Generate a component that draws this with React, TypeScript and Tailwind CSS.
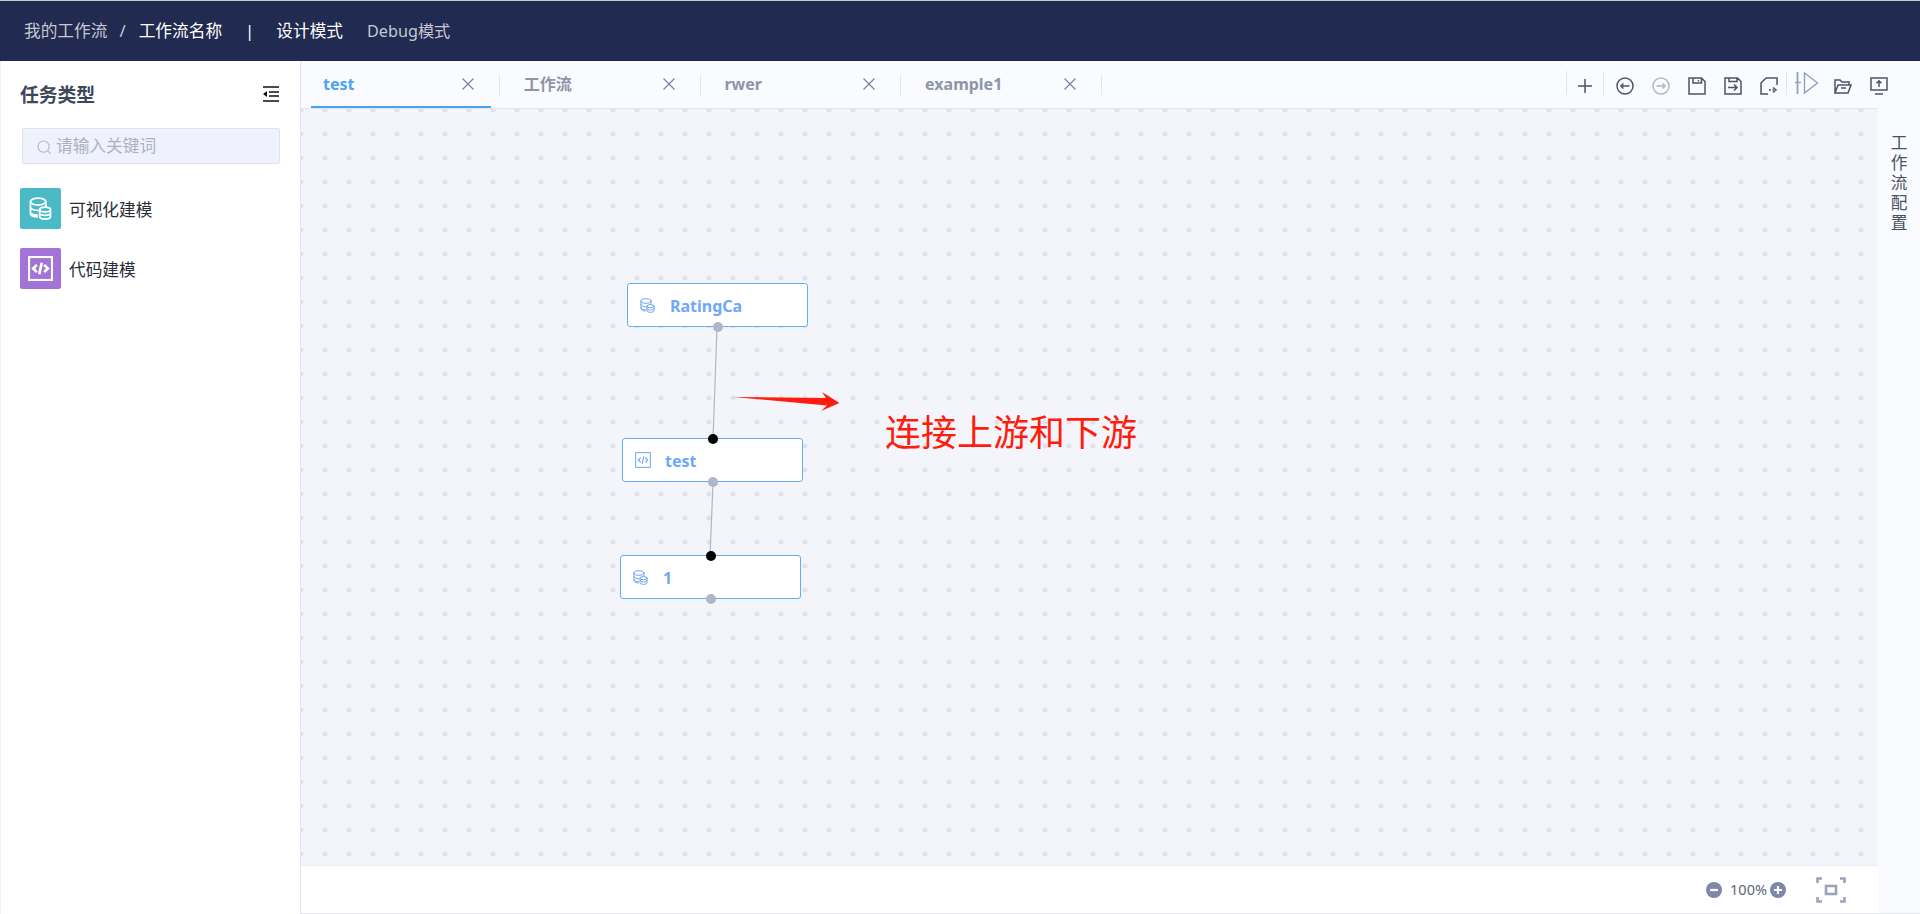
import React from "react";

const DbIcon = ({ className = "", color = "currentColor", sw = 1.6 }: { className?: string; color?: string; sw?: number }) => (
  <svg viewBox="0 0 24 24" className={className} fill="none" stroke={color} strokeWidth={sw} strokeLinecap="round">
    <ellipse cx="9.5" cy="4.8" rx="8" ry="3.6" />
    <path d="M1.5 4.8v12.4c0 1.9 3.2 3.4 7.2 3.5M1.5 10.5c0 1.9 3.5 3.5 8 3.5M1.5 15.5c0 1.8 3 3.2 7 3.4M17.5 4.8v5.4" />
    <ellipse cx="16.8" cy="13" rx="5.6" ry="2.5" />
    <path d="M11.2 13v7.5c0 1.3 2.5 2.4 5.6 2.4s5.6-1.1 5.6-2.4V13M11.2 16.8c0 1.3 2.5 2.4 5.6 2.4s5.6-1.1 5.6-2.4" />
  </svg>
);

const CodeIcon = ({ className = "", color = "currentColor", sw = 2, inner = 2.4 }: { className?: string; color?: string; sw?: number; inner?: number }) => (
  <svg viewBox="0 0 24 24" className={className} fill="none" stroke={color} strokeWidth={sw}>
    <rect x="1" y="1" width="22" height="22" />
    <path d="M8.5 8.5L5 12l3.5 3.5M15.5 8.5L19 12l-3.5 3.5M13.2 6.5l-2.4 11" strokeWidth={inner} />
  </svg>
);

const CloseX = () => (
  <svg viewBox="0 0 12 12" className="w-[12px] h-[12px]" fill="none" stroke="#78819f" strokeWidth="1.1">
    <path d="M.5.5l11 11M11.5.5l-11 11" />
  </svg>
);

const Tool = ({ children, faded = false }: { children: React.ReactNode; faded?: boolean }) => (
  <svg viewBox="0 0 18 18" className={`w-[18px] h-[18px] ${faded ? "text-[#b4b7bf]" : "text-[#4d5468]"}`} fill="none" stroke="currentColor" strokeWidth="1.5">
    {children}
  </svg>
);

const tabs = ["test", "工作流", "rwer", "example1"];

function Node({ left, top, label, kind, topPort }: { left: string; top: string; label: string; kind: "db" | "code"; topPort?: boolean }) {
  return (
    <div className={`absolute w-[181px] h-[44px] bg-white border border-[#62aef5] rounded-[3px] flex items-center pl-[12px] ${left} ${top}`}>
      {kind === "db" ? <DbIcon className="w-[15px] h-[15px]" color="#6ea4f2" sw={1.6} /> : <CodeIcon className="w-[16px] h-[16px]" color="#6ea4f2" sw={1.5} inner={1.7} />}
      <span className={`font-bold text-[16px] text-[#6ea8f7] pt-[1px] ${kind === "db" ? "ml-[15px]" : "ml-[14px]"}`}>{label}</span>
      {topPort && <span className="absolute left-1/2 -translate-x-1/2 -top-[5px] w-[10px] h-[10px] rounded-full bg-black" />}
      <span className="absolute left-1/2 -translate-x-1/2 -bottom-[6px] w-[10px] h-[10px] rounded-full bg-[#b1b5c9]" />
    </div>
  );
}

export default function App() {
  return (
    <div className="h-[914px] w-[1920px] flex flex-col overflow-hidden bg-white font-['Noto_Sans','Noto_Sans_CJK_SC',sans-serif]">
      <div className="h-px bg-[#c9cad0]" />
      <header className="h-[60px] bg-[#212a50] flex items-center pl-[24px] pt-[1px] text-[16.7px] leading-none">
        <span className="text-[#c5c8d2]">我的工作流</span>
        <span className="text-[#c5c8d2] ml-[12px]">/</span>
        <span className="text-white ml-[13px]">工作流名称</span>
        <span className="text-white ml-[23px]">|</span>
        <span className="text-white ml-[22px]">设计模式</span>
        <span className="text-[#c5c8d2] ml-[24px] text-[16.2px]">Debug模式</span>
      </header>

      <div className="flex-1 flex min-h-0">
        <aside className="w-[301px] shrink-0 border-r border-l border-r-[#e2e5f0] border-l-[#f0f1f3] bg-white flex flex-col pl-[19px]">
          <div className="flex items-center justify-between h-[26px] mt-[21px] pr-[20px]">
            <span className="text-[18.8px] font-bold text-[#40475a] leading-none">任务类型</span>
            <svg viewBox="0 0 18 18" className="w-[18px] h-[18px] -mt-[2px]" fill="none" stroke="#111" strokeWidth="1.6">
              <path d="M1 2h16M7 7h10M7 11h10M1 16h16" />
              <path d="M5 6v6L1 9z" fill="#111" stroke="none" />
            </svg>
          </div>
          <div className="mt-[20px] ml-[2px] w-[258px] h-[36px] rounded-[2px] bg-[#eff2fc] border border-[#dde2f1] flex items-center pl-[14px]">
            <svg viewBox="0 0 16 16" className="w-[15px] h-[15px] mt-[2px]" fill="none" stroke="#b3b8c8" strokeWidth="1.2">
              <circle cx="7" cy="7" r="6" />
              <path d="M11.5 11.5l3 3" />
            </svg>
            <span className="ml-[4px] mt-[1px] text-[16.7px] text-[#adb1bd] leading-none">请输入关键词</span>
          </div>
          <div className="mt-[24px] flex items-center h-[41px]">
            <div className="w-[41px] h-[41px] rounded-[2px] bg-[#4abac6] flex items-center justify-center">
              <DbIcon className="w-[23px] h-[25px]" color="#ffffff" sw={1.8} />
            </div>
            <span className="ml-[8px] mt-[3px] text-[16.7px] text-[#2a2d35] leading-none">可视化建模</span>
          </div>
          <div className="mt-[19px] flex items-center h-[41px]">
            <div className="w-[41px] h-[41px] rounded-[2px] bg-[#a274d8] flex items-center justify-center">
              <CodeIcon className="w-[25px] h-[25px]" color="#ffffff" sw={2} inner={2.6} />
            </div>
            <span className="ml-[8px] mt-[3px] text-[16.7px] text-[#2a2d35] leading-none">代码建模</span>
          </div>
        </aside>

        <main className="flex-1 flex flex-col min-w-0 bg-[#f9fbfe]">
          <div className="h-[47px] shrink-0 flex items-center">
            <div className="flex items-stretch h-[47px] pl-[10px]">
              {tabs.map((t, i) => (
                <div key={t} className="flex items-center">
                  <div className={`w-[180px] h-[47px] flex items-center justify-between pl-[12px] pr-[17px] border-b-2 ${i === 0 ? "border-[#4ba3ee]" : "border-transparent"}`}>
                    <span className={`font-bold text-[16px] leading-none ${i === 0 ? "text-[#4ea4f2]" : "text-[#8f95a6]"}`}>{t}</span>
                    <CloseX />
                  </div>
                  <div className="ml-[8px] mr-[11.7px] w-px h-[20px] bg-[#e2e5ee]" />
                </div>
              ))}
            </div>
            <div className="ml-auto flex items-center pr-[32px] pt-[3px]">
              <div className="w-px h-[24px] mb-[6px] bg-[#e2e5ee]" />
              <div className="w-[36px] flex justify-center">
                <Tool><path d="M9 2v14M2 9h14" /></Tool>
              </div>
              <div className="w-px h-[24px] mb-[6px] bg-[#e2e5ee] mr-[12px]" />
              <div className="flex items-center gap-[18px]">
                <Tool><circle cx="9" cy="9" r="8" /><path d="M13.5 9h-9M7.5 6.5L4.8 9l2.7 2.5" /></Tool>
                <Tool faded><circle cx="9" cy="9" r="8" /><path d="M4.5 9h9M10.5 6.5L13.2 9l-2.7 2.5" /></Tool>
                <Tool><path d="M1 1h12.5L17 4.5V17H1zM5 1v5h8.5V1M10.5 3v1.5" /></Tool>
                <Tool><path d="M1 1h12.5L17 4.5V17H1zM5 1v3.5h8V1M4 10.5h9M10 7.5l3 3-3 3" /></Tool>
                <Tool><path d="M6 1h11v7M6 1L1 6v11h7M9 13h2M12.5 13h1.5M13 10.5l3 2.5-3 2.5" /></Tool>
              </div>
              <div className="w-px h-[24px] mb-[6px] bg-[#e2e5ee] ml-[8px] mr-[8px]" />
              <svg viewBox="0 0 24 24" className="w-[24px] h-[24px] mb-[6px]" fill="none" strokeWidth="1.4">
                <path d="M2.5 1v22" stroke="#8ba2c2" strokeWidth="1.8" />
                <path d="M0 11.5h6" stroke="#8ba2c2" />
                <path d="M9.5 2L22.5 12 9.5 22z" stroke="#8ba2c2" />
              </svg>
              <div className="flex items-center gap-[18px] ml-[15px]">
                <Tool><path d="M1 16V3h5l2 2h7v3M1 16l3-8h13l-3 8zM7 11h5" /></Tool>
                <Tool><path d="M1 1h16v12H1zM5 17h8M9 10V4M6.5 6.2L9 3.8l2.5 2.4" /></Tool>
              </div>
            </div>
          </div>

          <div className="flex-1 flex min-h-0">
            <div className="flex-1 flex flex-col min-w-0">
              <div className="relative flex-1 border-t border-[#e2e4f2] bg-[#f4f5fa] bg-[radial-gradient(circle,#e0e2ea_2.5px,transparent_2.6px)] bg-[length:24px_24px] bg-[position:12px_-11px]">
                <svg className="absolute left-0 top-0 w-full h-full" fill="none">
                  <path d="M416 218L412 330M412 374L409 448" stroke="#b1b5c9" strokeWidth="1.2" />
                  <path d="M432 288L525 289L521 283L538.5 294L520 302L526 296.5z" fill="#ff1c0e" />
                </svg>
                <Node left="left-[326px]" top="top-[174px]" label="RatingCa" kind="db" />
                <Node left="left-[321px]" top="top-[329px]" label="test" kind="code" topPort />
                <Node left="left-[319px]" top="top-[446px]" label="1" kind="db" topPort />
                <span className="absolute left-[584px] top-[299px] text-[36px] leading-[50px] text-[#ff1c0e]">连接上游和下游</span>
              </div>
              <div className="h-[48px] shrink-0 bg-white border-t border-[#eceef4] flex items-center justify-end pr-[32px]">
                <svg viewBox="0 0 16 16" className="w-[16px] h-[16px]">
                  <circle cx="8" cy="8" r="8" fill="#7e86aa" />
                  <path d="M4 8h8" stroke="#fff" strokeWidth="2.2" />
                </svg>
                <span className="ml-[8px] text-[14.5px] leading-none text-[#5e6475]">100%</span>
                <svg viewBox="0 0 16 16" className="w-[16px] h-[16px] ml-[3px]">
                  <circle cx="8" cy="8" r="8" fill="#7e86aa" />
                  <path d="M4 8h8M8 4v8" stroke="#fff" strokeWidth="2.2" />
                </svg>
                <svg viewBox="0 0 30 26" className="w-[30px] h-[26px] ml-[30px]" fill="none" stroke="#9aa3b9" strokeWidth="2.6">
                  <path d="M1.5 6V1.5H6M24 1.5h4.5V6M1.5 20v4.5H6M24 24.5h4.5V20" />
                  <rect x="10" y="9" width="10" height="8" />
                </svg>
              </div>
            </div>
            <div className="w-[42px] shrink-0 flex flex-col items-center pt-[25px] text-[16.7px] leading-[20px] text-[#4b5265]">
              {"工作流配置".split("").map((c, i) => (
                <span key={i}>{c}</span>
              ))}
            </div>
          </div>
          <div className="h-px bg-[#e6e7ec] shrink-0" />
        </main>
      </div>
    </div>
  );
}
